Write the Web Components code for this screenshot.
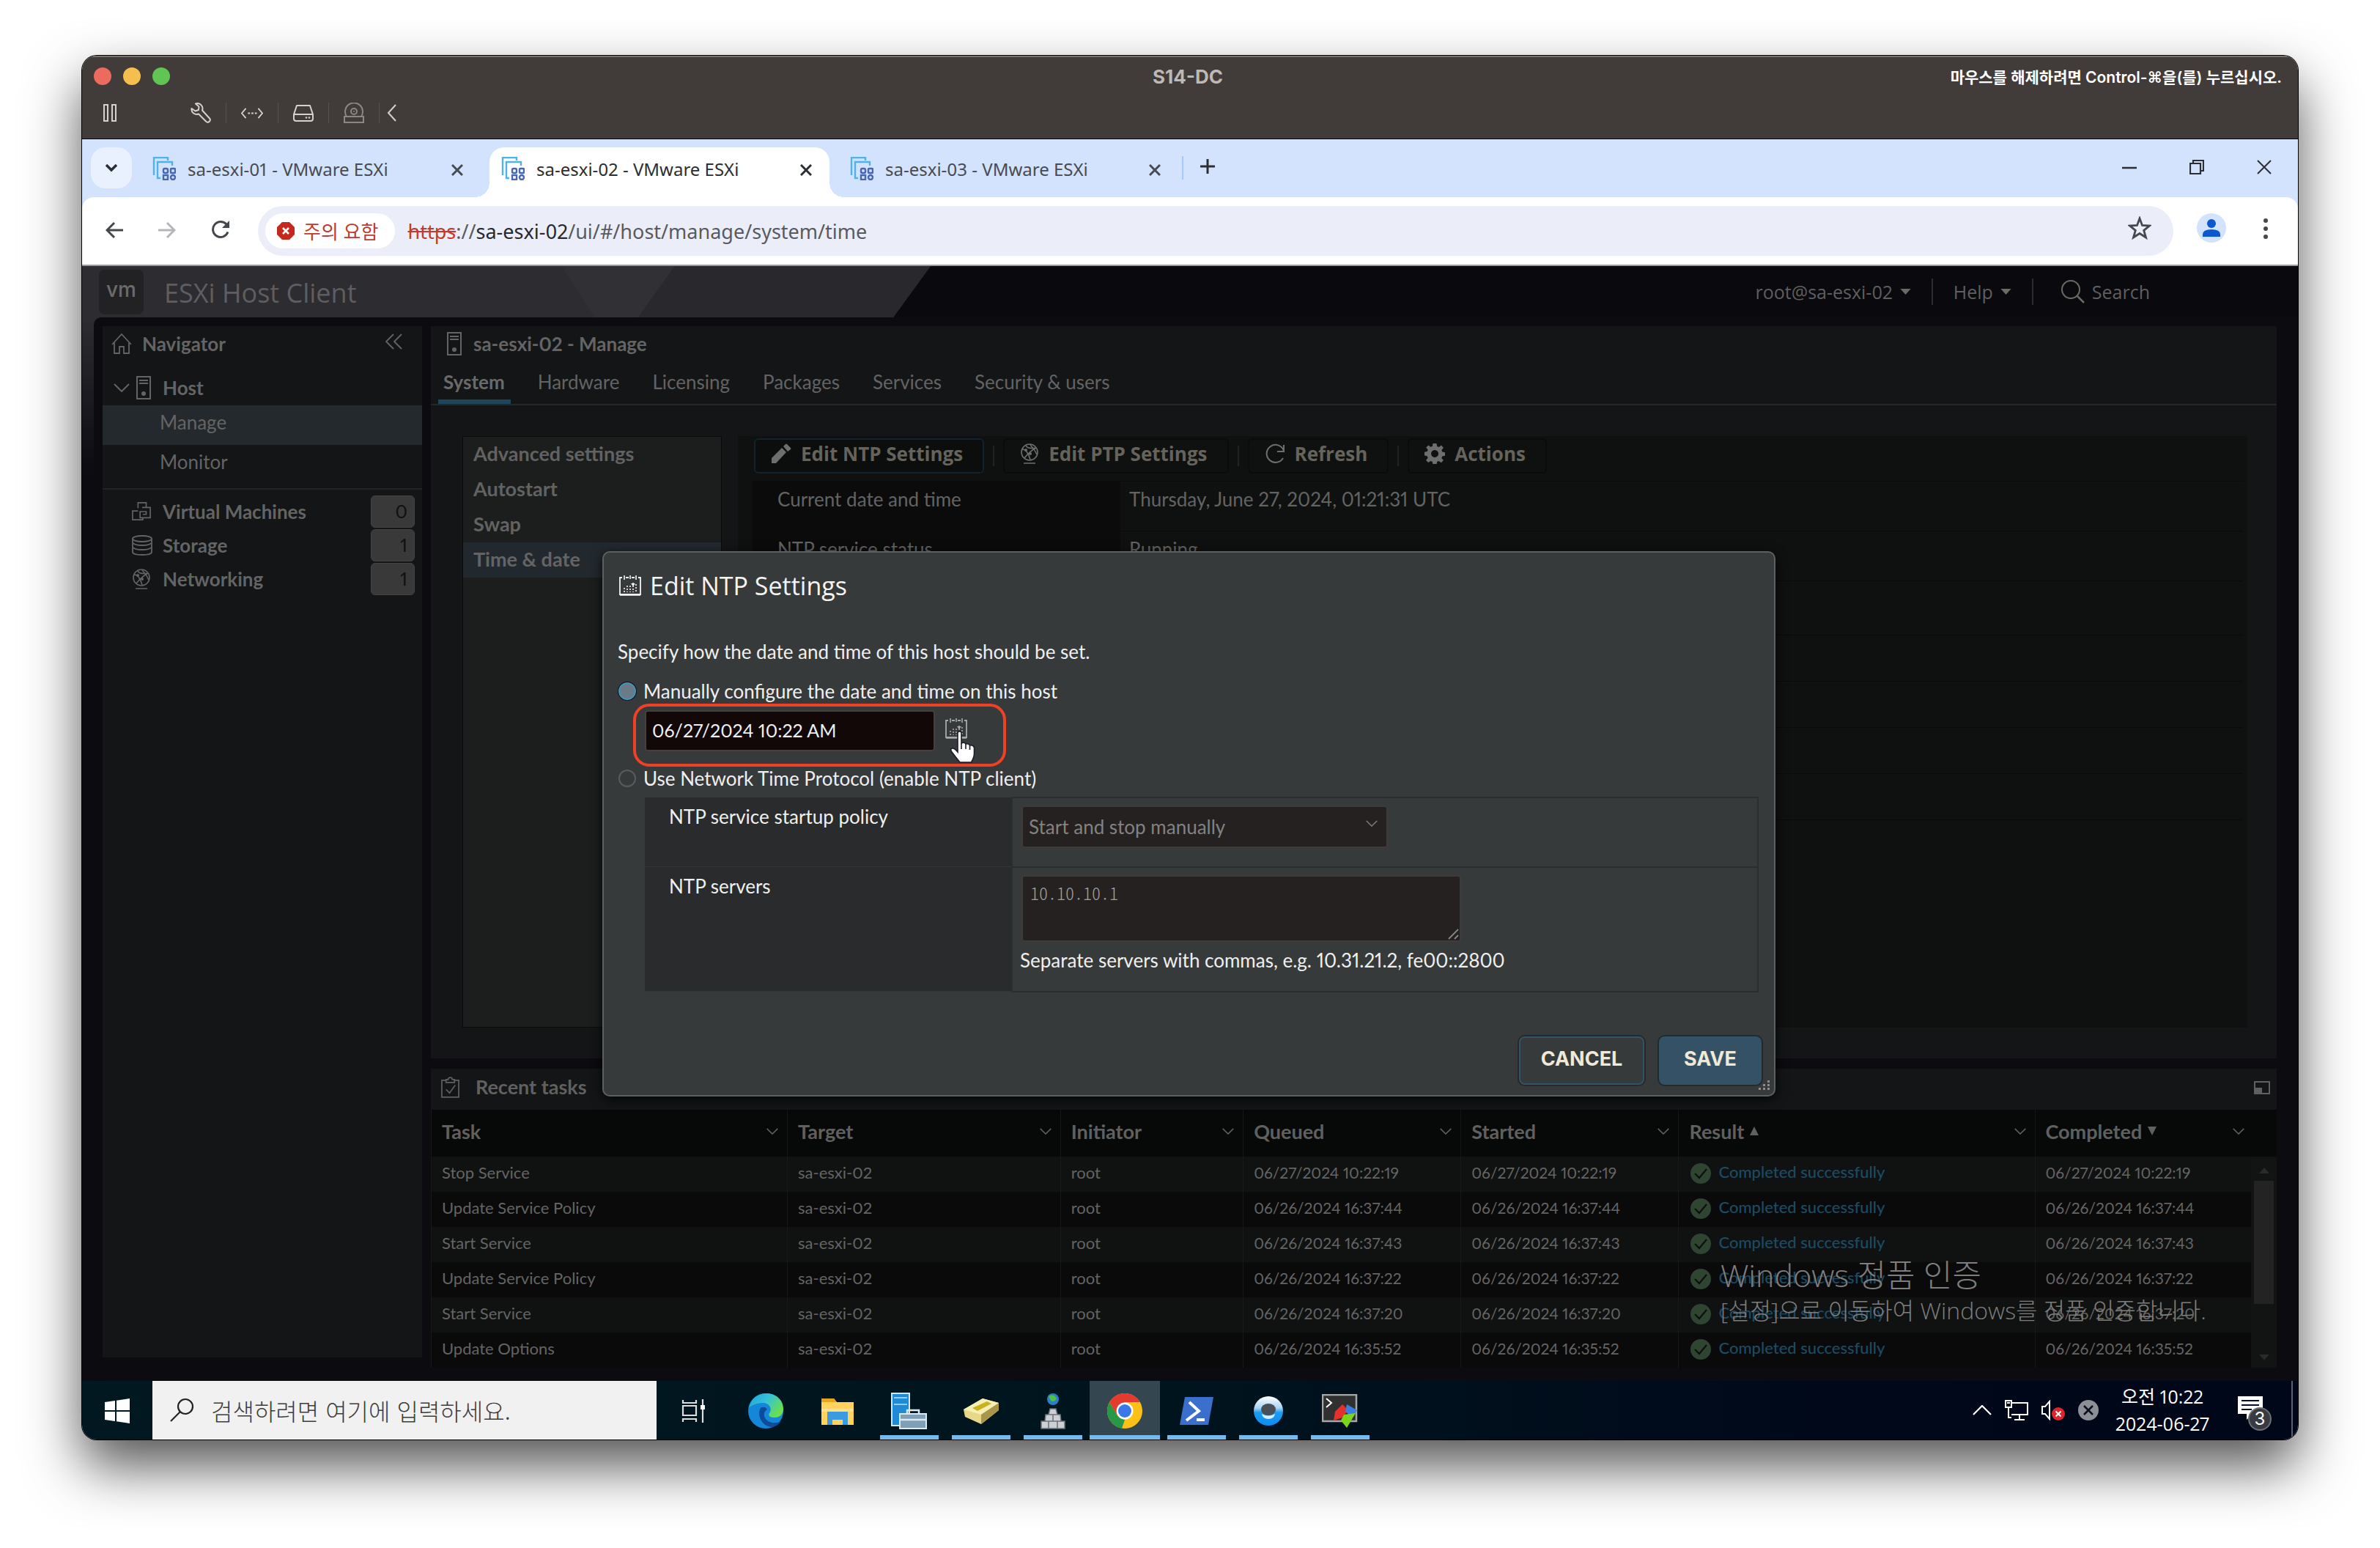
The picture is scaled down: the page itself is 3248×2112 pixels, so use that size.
<!DOCTYPE html>
<html lang="ko">
<head>
<meta charset="utf-8">
<title>S14-DC</title>
<style>
  body{margin:0;background:#fff;font-family:Lato,"Noto Sans CJK KR",sans-serif;font-variant-numeric:proportional-nums}
</style>
</head>
<body>
<vm-window></vm-window>
<script>
const ICONS = {
  pause:['0 0 20 24','<path d="M2 1h5v22H2zM13 1h5v22h-5z" fill="none" stroke="currentColor" stroke-width="2"/>'],
  wrench:['0 0 28 28','<path d="M7 1.500a7 7 0 0 1 9 9L26 21.500a3.200 3.200 0 0 1-4.500 4.500L11 15.500A7 7 0 0 1 1.500 8l5 3.500L11 10l.5-4.500z" fill="none" stroke="currentColor" stroke-width="2" stroke-linejoin="round"/>'],
  net:['0 0 32 16','<path d="M7 1 1 8l6 7M25 1l6 7-6 7" fill="none" stroke="currentColor" stroke-width="2"/><path d="M10 7h3v2h-3zM15 7h3v2h-3zM20 7h3v2h-3z" fill="currentColor"/>'],
  drive:['0 0 28 24','<path d="M5 2h18l4 12v6q0 3-3 3H4q-3 0-3-3v-6zM1 14h26" fill="none" stroke="currentColor" stroke-width="2" stroke-linejoin="round"/><circle cx="18" cy="18.500" r="1.300" fill="currentColor"/><circle cx="22" cy="18.500" r="1.300" fill="currentColor"/>'],
  disc:['0 0 28 28','<path d="M1 19h26v8H1zM4 19a12 12 0 1 1 20 0" fill="none" stroke="currentColor" stroke-width="2"/><circle cx="14" cy="12" r="4" fill="none" stroke="currentColor" stroke-width="2"/><circle cx="14" cy="12" r="1" fill="currentColor"/>'],
  chevleft:['0 0 14 24','<path d="M12 1 2 12l10 11" fill="none" stroke="currentColor" stroke-width="2"/>'],
  down:['0 0 20 12','<path d="m3 2 7 7 7-7" fill="none" stroke="currentColor" stroke-width="3.500"/>'],
  thin:['0 0 22 12','<path d="m1 1 10 10L21 1" fill="none" stroke="currentColor" stroke-width="2"/>'],
  esx:['0 0 32 32','<path d="M2 25V1h19v4" fill="none" stroke="#4fb3e8" stroke-width="2.400"/><path d="M11 29H7V7h20v5" fill="none" stroke="#4fb3e8" stroke-width="2.400"/><g fill="none" stroke="#4767b0" stroke-width="2.400"><rect x="15" y="16" width="6" height="6" rx="2"/><rect x="25" y="16" width="6" height="6" rx="1"/><rect x="15" y="25" width="6" height="6" rx="0"/><rect x="25" y="25" width="6" height="6" rx="3"/></g>'],
  x:['0 0 16 16','<path d="m1 1 14 14M15 1 1 15" stroke="currentColor" stroke-width="3"/>'],
  xthin:['0 0 20 20','<path d="m1 1 18 18M19 1 1 19" stroke="currentColor" stroke-width="2"/>'],
  plus:['0 0 20 20','<path d="M10 0v20M0 10h20" stroke="currentColor" stroke-width="3"/>'],
  minus:['0 0 20 20','<path d="M0 11h20" stroke="currentColor" stroke-width="2.500"/>'],
  restore:['0 0 20 20','<path d="M1 5h14v14H1zM5 5V1h14v14h-4" fill="none" stroke="currentColor" stroke-width="2.200"/>'],
  back:['0 0 24 24','<path d="M24 12H2M12 2 2 12l10 10" fill="none" stroke="currentColor" stroke-width="3"/>'],
  fwd:['0 0 24 24','<path d="M0 12h22M12 2l10 10-10 10" fill="none" stroke="currentColor" stroke-width="3"/>'],
  reload:['0 0 26 26','<path d="M23 16.500A10.500 10.500 0 1 1 21 6l3 3" fill="none" stroke="currentColor" stroke-width="3"/><path d="M25 1v10H15z" fill="currentColor"/>'],
  warn:['0 0 24 24','<path d="M7 0h10l7 7v10l-7 7H7l-7-7V7z" fill="#c5281c"/><path d="m8 8 8 8M16 8l-8 8" stroke="#fff" stroke-width="2.600"/>'],
  star:['0 0 32 32','<path d="m16 3 3.500 9.500 10 .5-7.800 6.300L24.500 29 16 23.500 7.500 29l2.800-9.700L2.500 13l10-.5z" fill="none" stroke="currentColor" stroke-width="2.800"/>'],
  person:['0 0 40 40','<circle cx="20" cy="20" r="20" fill="#d3e3fd"/><circle cx="20" cy="14" r="6" fill="#0b57d0"/><path d="M8 32v-3q0-7 12-7t12 7v3z" fill="#0b57d0"/>'],
  dots:['0 0 8 28','<g fill="currentColor"><circle cx="4" cy="3" r="3"/><circle cx="4" cy="14" r="3"/><circle cx="4" cy="25" r="3"/></g>'],
  caret:['0 0 16 9','<path d="M0 0h16l-8 9z" fill="currentColor"/>'],
  up:['0 0 16 9','<path d="M0 9h16L8 0z" fill="currentColor"/>'],
  triup:['0 0 12 12','<path d="M0 12h12L6 0z" fill="currentColor"/>'],
  tridown:['0 0 12 12','<path d="M0 0h12L6 12z" fill="currentColor"/>'],
  search:['0 0 32 32','<circle cx="13" cy="13" r="12" fill="none" stroke="currentColor" stroke-width="2"/><path d="m22 22 9 9" stroke="currentColor" stroke-width="2.500"/>'],
  home:['0 0 28 28','<path d="M1 15 14 1l13 14M4 12v15h7v-9h6v9h7V12" fill="none" stroke="currentColor" stroke-width="1.800"/>'],
  collapse:['0 0 24 22','<path d="M11 1 1 11l10 10M22 1 12 11l10 10" fill="none" stroke="currentColor" stroke-width="1.800"/>'],
  server:['0 0 20 32','<path d="M1 1h18v30H1zM4 6h12M4 10h12" fill="none" stroke="currentColor" stroke-width="2"/><circle cx="10" cy="24" r="3" fill="currentColor"/>'],
  vms:['0 0 28 28','<path d="M9 9V1h12v7M9 13h-8v13h15v-4M15 8h12v15H12v-9h9v4h-5" fill="none" stroke="currentColor" stroke-width="1.800"/>'],
  store:['0 0 28 28','<path d="M1 5v18q0 4 13 4t13-4V5" fill="none" stroke="currentColor" stroke-width="1.800"/><ellipse cx="14" cy="5" rx="13" ry="4" fill="none" stroke="currentColor" stroke-width="1.800"/><path d="M2 11q2 3 12 3t12-3M2 17q2 3 12 3t12-3" fill="none" stroke="currentColor" stroke-width="1.800"/>'],
  globe:['0 0 26 28','<g fill="none" stroke="currentColor" stroke-width="1.600"><circle cx="13" cy="12" r="11"/><path d="M3 8q7 0 11 14M8 3q3 5 14 3M22 6q-8 4-16 14M14 2q6 6 9 13M5 27h16"/></g><circle cx="8" cy="9" r="2" fill="currentColor"/><circle cx="14" cy="14" r="2" fill="currentColor"/>'],
  pencil:['0 0 28 28','<path d="M1 27v-7L15 6l6 6L7 27zM17 4l3-3q1-1 2 0l5 5q1 1 0 2l-4 3z" fill="currentColor"/>'],
  refresh:['0 0 28 28','<path d="M25 20a12 12 0 1 1 1-10M26 2v9h-9" fill="none" stroke="currentColor" stroke-width="2"/>'],
  gear:['0 0 28 28','<path fill-rule="evenodd" d="M11.500 0h5l.7 4 2.500 1L23 2.600 25.900 6l-2.600 3 1 2.500 3.700.8v4.400l-3.700.8-1 2.500 2.600 3-3.100 3.300-3.300-2.300-2.400 1-.6 4h-5l-.7-4-2.400-1L5.200 26 2 23l2.600-3.300-1-2.400L0 16.500v-4.700l3.700-.7 1-2.400L2.200 5.500 5.300 2.400l3.200 2.400 2.400-1zM14 9a5 5 0 1 0 .1 0z" fill="currentColor"/>'],
  cal:['0 0 30 28','<path d="M4 3H1v23h28V3h-3M9 3h4M17 3h4" fill="none" stroke="currentColor" stroke-width="1.800"/><path d="M1 26.500h28" stroke="currentColor" stroke-width="2.500"/><path d="M7 0v6M15 0v5M23 0v6" stroke="currentColor" stroke-width="1.600"/><path d="M7 17v6M11 14v9M15 14v9M19 10v13M23 12v11" stroke="currentColor" stroke-width="1.600" stroke-dasharray="2 2"/><path d="M16 11h6l-3 4z" fill="currentColor"/>'],
  clip:['0 0 26 30','<path d="M7 5H1v24h24V5h-6M7 8V4h3q0-3 3-3t3 3h3v4z" fill="none" stroke="currentColor" stroke-width="1.800"/><path d="m7 18 5 5 8-11" fill="none" stroke="currentColor" stroke-width="1.800"/>'],
  pop:['0 0 22 18','<path d="M1 1h20v16H1z" fill="none" stroke="currentColor" stroke-width="2"/><path d="M2 9h9v8H2z" fill="currentColor"/>'],
  ok:['0 0 28 28','<circle cx="14" cy="14" r="14" fill="#304432"/><path d="m6 14 6 6L22 8" fill="none" stroke="#0d0f0d" stroke-width="2.200"/>'],
  grip:['0 0 16 16','<path d="m2 15 13-13M10 15l5-5" stroke="currentColor" stroke-width="1.800"/>'],
  gripdots:['0 0 16 14','<g fill="currentColor"><path d="M13 0h3v3h-3zM13 5h3v3h-3zM13 10h3v3h-3zM7 5h3v3H7zM7 10h3v3H7zM1 10h3v3H1z"/></g>'],
  hand:['0 0 36 44','<path d="M11 3q0-2 2.500-2T16 3v14q4-2 6 1 4-1 5.500 2 5-1 6 3v8q0 5-4 12H14Q9 37 3 29q-3-5 1-5 3 0 7 5z" fill="#fff" stroke="#1b1d2c" stroke-width="1.600"/><path d="M16 17v8M22 18v7M27.500 20v6" stroke="#1b1d2c" stroke-width="1.600"/>'],
  win:['0 0 34 34','<path d="M0 5l14-2v13H0zM16 2.700 34 0v16H16zM0 18h14v13L0 29zM16 18h18v16l-18-2.700z" fill="#fff"/>'],
  find:['0 0 34 34','<circle cx="21" cy="12" r="10" fill="none" stroke="#222" stroke-width="2.200"/><path d="M14 19 1 32" stroke="#222" stroke-width="2.200"/>'],
  taskview:['0 0 34 34','<path d="M2 2v4h18V2M2 32v-4h18v4M2 10h18v13H2zM29 1v32" fill="none" stroke="#ddd" stroke-width="2.200"/><path d="M26 9h6v6h-6z" fill="#fff"/>'],
  edge:['0 0 48 48','<defs><linearGradient id="g" x1="0" y1="0" x2="1" y2=".6"><stop offset="0" stop-color="#1ba0dc"/><stop offset=".5" stop-color="#35c3d8"/><stop offset="1" stop-color="#6be04a"/></linearGradient></defs><circle cx="24" cy="24" r="24" fill="#1487d8"/><path d="M1 20C4 6 14 0 25 0c14 0 23 10 23 21 0 9-6 12-12 12-7 0-9-3-7-6 5-7-1-14-9-14C11 13 3 17 1 20z" fill="url(#g)"/><path d="M17 20c-5 8 0 25 16 26 5-1 9-4 12-8-10 5-21 1-23-7-1-5 2-8 4-9-2-4-6-4-9-2z" fill="#0d4c9c"/>'],
  folder:['0 0 44 38','<path d="M0 2h17l4 5h23v31H0z" fill="#ffd35c"/><path d="M0 2h17l4 5H0z" fill="#e8a41c"/><path d="M8 38V20h28v18h-7v-7H15v7z" fill="#3a9be0"/><path d="M0 16h44v4H0z" fill="#ffdf84"/>'],
  srvmgr:['0 0 50 50','<path d="M1 1h24v44H1z" fill="#1f8ad6" stroke="#cfe8f8" stroke-width="2"/><path d="M4 7h18M4 16h18" stroke="#8fd0fa" stroke-width="2"/><path d="M12 29h36v20H12z" fill="#7f9fb5" stroke="#dbe9f2" stroke-width="2"/><path d="M22 29v-5h16v5M12 37h36" fill="none" stroke="#dbe9f2" stroke-width="2.500"/>'],
  box:['0 0 48 40','<path d="M0 18 26 3l22 6v10L24 38 2 28z" fill="#e6d888"/><path d="M0 18 26 3l22 6-24 16z" fill="#f5efb4"/><path d="M24 25 48 9v10L24 38z" fill="#a8974a"/><path d="m12 16 20-9 6 3-19 10z" fill="#c7b31c"/>'],
  lab:['0 0 40 50','<circle cx="20" cy="9" r="8" fill="#2b7fc4"/><path d="M14 5q7-4 11 3-3 6-8 3z" fill="#4fc04f"/><path d="M16 22h8l2 8h4l1 9h5v10H4V39h5l1-9h4z" fill="#ccd0d4" stroke="#6b7075" stroke-width="1.500"/><path d="M9 39h22M15 30h10M20 30v9M14 39v10M26 39v10" stroke="#6b7075" stroke-width="1.500"/>'],
  chrome:['0 0 48 48','<circle cx="24" cy="24" r="24" fill="#fbc116"/><path d="M3.200 12 13.600 30 24 36 20 47.700A24 24 0 0 1 3.200 12z" fill="#279847"/><path d="M3.200 12A24 24 0 0 1 44.800 12H24L13.600 30z" fill="#e33b2e"/><circle cx="24" cy="24" r="11.500" fill="#fff"/><circle cx="24" cy="24" r="9" fill="#3b78e7"/>'],
  ps:['0 0 46 38','<path d="M7 0h39l-7 38H0z" fill="#3b6fce"/><path d="m13 7 13 12L9 32" fill="none" stroke="#fff" stroke-width="4"/><path d="M23 31h11" stroke="#fff" stroke-width="4"/>'],
  orb:['0 0 40 40','<defs><linearGradient id="o" x1="0" y1="0" x2="0" y2="1"><stop offset="0" stop-color="#fff"/><stop offset=".4" stop-color="#a9d4f2"/><stop offset=".55" stop-color="#1c9cf0"/><stop offset="1" stop-color="#0c8cf0"/></linearGradient></defs><circle cx="20" cy="20" r="20" fill="url(#o)"/><ellipse cx="20" cy="18" rx="10" ry="8" fill="#4a4f57"/><path d="M11 24q9 5 18 0-1 7-9 7t-9-7z" fill="#d5effd"/>'],
  term:['0 0 50 46','<path d="M1 1h46v36H1z" fill="#303030" stroke="#a7a7a7" stroke-width="2.500"/><path d="m6 6 7 6-7 6" fill="none" stroke="#fff" stroke-width="2"/><path d="m28 14 8 8-8 10-12 4 2-12z" fill="#e5302c"/><path d="m34 14 14 8-6 10-10-8z" fill="#3c7fe0"/><path d="m30 28 16-2-12 20-8-10z" fill="#7ad618"/>'],
  tup:['0 0 26 14','<path d="m1 13 12-12 12 12" fill="none" stroke="#fff" stroke-width="2.200"/>'],
  monitor:['0 0 32 28','<path d="M9 4h22v16H9M20 20v6M13 27h14M1 1h8v9H1zM5 10v14h4" fill="none" stroke="#fff" stroke-width="2"/><path d="M3 4h4" stroke="#fff" stroke-width="2"/>'],
  mute:['0 0 32 28','<path d="M1 9h4l6-7v24l-6-7H1z" fill="none" stroke="#fff" stroke-width="2"/><circle cx="23" cy="19" r="9" fill="#e0242c"/><path d="m19.500 15.500 7 7M26.500 15.500l-7 7" stroke="#fff" stroke-width="2"/>'],
  xc:['0 0 28 28','<circle cx="14" cy="14" r="14" fill="#8d8f96"/><path d="m8 8 12 12M20 8 8 20" stroke="#0a1020" stroke-width="2.600"/>'],
  note:['0 0 34 32','<path d="M0 0h34v24H20l-8 8v-8H0z" fill="#fff"/><path d="M5 6h24M5 12h24M5 18h14" stroke="#06101c" stroke-width="2"/>']
};
const define = (name, css, html) => customElements.define(name, class extends HTMLElement {
  connectedCallback(){
    if (this.shadowRoot) return;
    const root = this.attachShadow({mode:'open'});
    const t = document.createElement('template');
    t.innerHTML = `<style>*{box-sizing:border-box}:host{display:block;box-sizing:border-box}button{font:inherit;color:inherit;background:none;border:0;padding:0;margin:0}a{color:inherit;text-decoration:none}${css}</style>` + (typeof html === 'function' ? html(this) : html);
    root.append(t.content.cloneNode(true));
  }
});

define('ui-icon', ':host{display:inline-block;flex:none;line-height:0}svg{display:block}', el => {
  const [vb, body] = ICONS[el.getAttribute('name')];
  const [, , w, h] = vb.split(' ').map(Number);
  const width = Number(el.getAttribute('w')) || w;
  return `<svg viewBox="${vb}" width="${width}" height="${Math.round(width * h / w)}" aria-hidden="true">${body}</svg>`;
});

define('mac-titlebar', `
  :host{background:#413c39;border-top:2px solid #76726e;border-bottom:1px solid #000;color:#d4d0cd;padding-bottom:11px;font-family:Inter,"Noto Sans CJK KR",sans-serif}
  .top{display:grid;grid-template-columns:1fr auto 1fr;align-items:center;height:52px;padding:0 22px 0 16px}
  .lights{display:flex;gap:16px}
  .lights i{width:24px;height:24px;border-radius:50%}
  b{font-size:26px;font-weight:700;color:#bdb9b6}
  .hint{justify-self:end;color:#fff;font-size:21px;font-weight:600}
  .tools{display:flex;align-items:center;height:48px;padding-left:28px}
  .tools ui-icon:first-child{margin-right:100px}
  .tools s{width:1px;height:28px;background:#57524f;margin:0 20px}
  .tools s:last-of-type{margin-right:10px}
  .dim{color:#8b8784}`,
  `<div class="top"><div class="lights"><i style="background:#ed6a5e"></i><i style="background:#f5bf4f"></i><i style="background:#61c554"></i></div><b>S14-DC</b><span class="hint">마우스를 해제하려면 Control-⌘을(를) 누르십시오.</span></div>
  <div class="tools"><ui-icon name="pause"></ui-icon><ui-icon name="wrench"></ui-icon><s></s><ui-icon name="net" w="30"></ui-icon><s></s><ui-icon name="drive"></ui-icon><s></s><ui-icon name="disc" class="dim"></ui-icon><s></s><ui-icon name="chevleft"></ui-icon></div>`);

define('browser-tab', `
  :host{width:464px;height:68px;display:flex;align-items:center;padding:0 24px 10px 16px;gap:16px;position:relative;border-radius:20px 20px 0 0;color:#474b52}
  :host([active]){background:#fff;color:#2b2e33}
  :host([active])::before,:host([active])::after{content:"";position:absolute;bottom:0;width:20px;height:20px}
  :host([active])::before{left:-20px;background:radial-gradient(circle at 0 0,transparent 20px,#fff 20px)}
  :host([active])::after{right:-20px;background:radial-gradient(circle at 100% 0,transparent 20px,#fff 20px)}
  span{flex:1;white-space:nowrap}`,
  `<ui-icon name="esx"></ui-icon><span><slot></slot></span><button aria-label="Close tab"><ui-icon name="x"></ui-icon></button>`);

define('tab-strip', `
  :host{background:#d3e3fd;display:flex;align-items:flex-end;height:79px;padding-left:12px;font-family:"Noto Sans","Noto Sans CJK KR",sans-serif;font-size:24px;color:#2b2e33}
  .list{width:56px;height:56px;border-radius:20px;background:#eaf1fe;margin:0 12px 12px 0;display:grid;place-items:center}
  .tabs{display:flex;gap:12px}
  s{width:2px;height:32px;background:#a8c7fa;margin:0 23px 24px 5px}
  .add{margin-bottom:25px}
  .win{margin-left:auto;display:flex;gap:72px;padding:0 36px 24px 0}`,
  `<button class="list" aria-label="Search tabs"><ui-icon name="down" w="20"></ui-icon></button>
  <div class="tabs"><browser-tab>sa-esxi-01 - VMware ESXi</browser-tab><browser-tab active>sa-esxi-02 - VMware ESXi</browser-tab><browser-tab>sa-esxi-03 - VMware ESXi</browser-tab></div>
  <s></s><button class="add" aria-label="New tab"><ui-icon name="plus"></ui-icon></button>
  <div class="win"><button aria-label="Minimize"><ui-icon name="minus"></ui-icon></button><button aria-label="Restore"><ui-icon name="restore"></ui-icon></button><button aria-label="Close"><ui-icon name="xthin"></ui-icon></button></div>`);

define('browser-toolbar', `
  :host{background:#d3e3fd}
  .bar{background:#fff;border-radius:16px 16px 0 0;display:flex;align-items:center;height:94px;border-bottom:2px solid #9b9b9b;padding:0 40px 0 32px;color:#44474c;font-family:"Noto Sans","Noto Sans CJK KR",sans-serif;font-size:27px}
  .nav{display:flex;gap:48px;width:208px;align-items:center}
  .omni{flex:1;height:68px;border-radius:34px;background:#ebeef8;display:flex;align-items:center;padding:0 30px 0 10px}
  .chip{background:#fff;border-radius:24px;height:48px;display:flex;align-items:center;gap:12px;padding:0 23px 0 16px;color:#c03a2f;font-size:26px;margin-right:17px}
  .url{flex:1;color:#575b61}.url b{font-weight:400;color:#26292e}.url del{color:#c5392d}
  .me{margin:0 50px 0 32px}`,
  `<div class="bar"><div class="nav"><button aria-label="Back"><ui-icon name="back"></ui-icon></button><button aria-label="Forward" style="color:#b4b6b9"><ui-icon name="fwd"></ui-icon></button><button aria-label="Reload"><ui-icon name="reload"></ui-icon></button></div>
  <div class="omni"><button class="chip"><ui-icon name="warn"></ui-icon>주의 요함</button><span class="url"><del>https</del>://<b>sa-esxi-02</b>/ui/#/host/manage/system/time</span><button aria-label="Bookmark"><ui-icon name="star"></ui-icon></button></div>
  <button class="me" aria-label="Profile"><ui-icon name="person"></ui-icon></button><button aria-label="Menu"><ui-icon name="dots"></ui-icon></button></div>`);

define('esxi-header', `
  :host{height:70px;display:flex;align-items:center;background:#09090e;position:relative;color:#5f5f5f;padding:0 202px 0 23px;font-size:26px}
  .art{position:absolute;left:0;top:0}
  .vm{position:relative;width:61px;height:61px;border-radius:8px;background:#222225;display:grid;place-items:center;font:500 28px Inter,sans-serif;color:#6b6b6b;padding-bottom:6px;margin:0 28px 0 0}
  h1{position:relative;margin:2px auto 0 0;font:400 36px "Open Sans",sans-serif;color:#5e5e60}
  .m{display:flex;align-items:center;gap:10px;font-family:"Open Sans",sans-serif;font-size:25px}
  .m ui-icon{color:#6b6a64}
  s{width:2px;height:36px;background:#2c2c2e;margin:0 28px}
  s+.m+s{margin-right:38px}`,
  `<svg class="art" width="1160" height="70" aria-hidden="true"><path d="M0 0h1158l-51 70H0z" fill="#2d2c31"/><path d="M655 0h154l-50 70h-60z" fill="#313035"/><path d="M809 0h349l-51 70H759z" fill="#29282d"/></svg>
  <div class="vm">vm</div><h1>ESXi Host Client</h1>
  <button class="m">root@sa-esxi-02 <ui-icon name="caret" w="15"></ui-icon></button><s></s><button class="m">Help <ui-icon name="caret" w="15"></ui-icon></button><s></s><button class="m"><ui-icon name="search"></ui-icon>Search</button>`);

define('nav-count', `:host{width:60px;height:44px;border-radius:6px;background:#393939;color:#101010;border:1px solid #434343;text-align:right;padding-right:9px;line-height:40px;font-size:25px;font-weight:400;margin-left:auto}`, `<slot></slot>`);

define('host-navigator', `
  :host{background:#131517;color:#646464;font-size:26px;font-weight:700}
  header{height:50px;display:flex;align-items:center;padding:0 26px 2px 12px;gap:14px}
  header button{margin-left:auto;padding-bottom:4px}
  .host{height:58px;display:flex;align-items:center;padding:10px 0 0 15px}
  .host ui-icon+ui-icon{margin:0 16px 0 9px}
  .sub{display:block;padding-left:78px;font-weight:400;height:54px;line-height:46px;color:#646464}
  .on{background:#23292d}
  hr{border:0;border-top:2px solid #222426;margin:5px 0 7px}
  .row{display:flex;align-items:center;height:46px;padding:0 10px 0 40px;gap:14px}
  .row ui-icon{width:28px}`,
  `<header><ui-icon name="home"></ui-icon>Navigator<button aria-label="Collapse"><ui-icon name="collapse"></ui-icon></button></header>
  <div class="host"><ui-icon name="thin"></ui-icon><ui-icon name="server"></ui-icon>Host</div>
  <a class="sub on" href="#manage">Manage</a><a class="sub" href="#monitor">Monitor</a><hr>
  <a class="row" href="#vms"><ui-icon name="vms" w="26"></ui-icon>Virtual Machines<nav-count>0</nav-count></a>
  <a class="row" href="#storage"><ui-icon name="store"></ui-icon>Storage<nav-count>1</nav-count></a>
  <a class="row" href="#net"><ui-icon name="globe"></ui-icon>Networking<nav-count>1</nav-count></a>`);

define('tool-button', `
  :host{display:flex;align-items:center}
  button{height:48px;border:2px solid #0a0b0b;border-radius:6px;display:flex;align-items:center;gap:13px;padding:0 27px 6px 21px;font:700 26px "Open Sans",sans-serif;color:#65635b;background:#0e1110;white-space:nowrap}
  button ui-icon{color:#6e6e6e}
  :host([focused]) button{border-color:#10232e;background:#0b0e0d}
  :host(:not(:last-child))::after{content:"";width:2px;height:28px;background:#222;margin:0 12px}`,
  el => `<button><ui-icon name="${el.getAttribute('icon')}"></ui-icon><slot></slot></button>`);

define('manage-panel', `
  :host{background:#131517;color:#636363;font-size:26px;display:flex;flex-direction:column}
  header{height:54px;display:flex;align-items:center;gap:16px;padding:0 22px 6px;font-weight:700;color:#646464;font-size:26px}
  nav{display:flex;gap:30px;border-bottom:2px solid #25282a;padding-left:10px}
  nav a{height:52px;line-height:45px;padding:0 8px 0 7px;border-bottom:6px solid transparent}
  nav a.on{font-weight:700;color:#6a6a6a;border-color:#1c475b}
  .body{flex:1;display:grid;grid-template-columns:354px minmax(0,1fr);gap:22px;padding:42px 40px 42px 43px}
  .side{background:#1c1e1d;border:1px solid #0a0b0b;font-weight:700;font-size:27px;color:#626262}
  .side a{display:block;height:48px;line-height:46px;padding-left:14px}
  .side .on{background:#22292e;color:#646464}
  .detail{background:#0f1110;padding:3px 6px 0 20px}
  .tools{display:flex;height:58px;align-items:flex-start;padding-left:2px}
  table{width:100%;border-collapse:collapse;table-layout:fixed}
  th{width:502px;background:#0b0b0b;text-align:left;font-weight:400;padding:5px 0 0 34px}
  td{padding:5px 0 0 12px}
  th,td{vertical-align:top;line-height:38px;height:68px;border-top:1px solid #0a0b0b}
  td{border-bottom:1px solid #090a0a}
  tr.tall td,tr.tall th{height:74px}tr.low td,tr.low th{height:63px}`,
  `<header><ui-icon name="server"></ui-icon>sa-esxi-02 - Manage</header>
  <nav><a class="on" href="#s">System</a><a href="#h">Hardware</a><a href="#l">Licensing</a><a href="#p">Packages</a><a href="#v">Services</a><a href="#u">Security &amp; users</a></nav>
  <div class="body"><div class="side"><a href="#adv">Advanced settings</a><a href="#auto">Autostart</a><a href="#swap">Swap</a><a class="on" href="#time">Time &amp; date</a></div>
  <div class="detail"><div class="tools"><tool-button icon="pencil" focused>Edit NTP Settings</tool-button><tool-button icon="globe">Edit PTP Settings</tool-button><tool-button icon="refresh">Refresh</tool-button><tool-button icon="gear">Actions</tool-button></div>
  <table><tr><th>Current date and time</th><td>Thursday, June 27, 2024, 01:21:31 UTC</td></tr><tr><th>NTP service status</th><td>Running</td></tr><tr class="tall"><th></th><td></td></tr><tr class="low"><th></th><td></td></tr><tr class="low"><th></th><td></td></tr><tr class="low"><th></th><td></td></tr><tr class="low"><th></th><td></td></tr></table></div></div>`);

const TASKS = [['Stop Service','06/27/2024 10:22:19'],['Update Service Policy','06/26/2024 16:37:44'],['Start Service','06/26/2024 16:37:43'],['Update Service Policy','06/26/2024 16:37:22'],['Start Service','06/26/2024 16:37:20'],['Update Options','06/26/2024 16:35:52']];
define('recent-tasks', `
  :host{color:#646464;background:#131517}
  header{height:56px;display:flex;align-items:center;gap:22px;padding:0 9px 6px 14px;font-size:27px;line-height:30px;font-weight:700;color:#606060}
  header button{margin-left:auto}
  .wrap{position:relative}
  table{width:100%;border-collapse:collapse;table-layout:fixed}
  th{height:64px;background:#070909;text-align:left;font-size:27px;font-weight:700;color:#606060;padding:0 12px 6px 14px;border-left:1px solid #151717}
  th div{display:flex;align-items:center;gap:8px}
  th .c{margin-left:auto}
  th:last-child .c{margin-right:32px}
  td{height:48px;font-size:22px;padding:0 0 6px 14px;border-left:1px solid #171919;white-space:nowrap}
  .d{font-size:21px}
  tr:nth-child(odd) td{background:#101111}tr:nth-child(even) td{background:#0a0a0a}
  .r{display:flex;align-items:center;gap:10px;color:#1d4b61;font-size:22px;line-height:26px;font-weight:500}
  .r ui-icon{margin:4px 0 0 2px}
  .bar{position:absolute;right:0;top:65px;bottom:0;width:35px;background:#121313;display:flex;flex-direction:column;align-items:center;padding:14px 0 10px;color:#2a2a2a}
  .bar i{width:27px;height:168px;background:#232323;margin:10px 0 auto}`,
  () => `<header><ui-icon name="clip" w="25"></ui-icon>Recent tasks<button aria-label="Minimize"><ui-icon name="pop"></ui-icon></button></header>
  <div class="wrap"><table><colgroup><col style="width:19.300%"><col style="width:14.800%"><col style="width:9.900%"><col style="width:11.800%"><col style="width:11.800%"><col style="width:19.300%"><col></colgroup>
  <thead><tr>${['Task','Target','Initiator','Queued','Started','Result','Completed'].map(h => `<th><div>${h}${h==='Result'?'<ui-icon name="triup"></ui-icon>':h==='Completed'?'<ui-icon name="tridown"></ui-icon>':''}<ui-icon class="c" name="thin" w="16"></ui-icon></div></th>`).join('')}</tr></thead>
  <tbody>${TASKS.map(([t,d]) => `<tr><td>${t}</td><td>sa-esxi-02</td><td>root</td><td class="d">${d}</td><td class="d">${d}</td><td><div class="r"><ui-icon name="ok"></ui-icon>Completed successfully</div></td><td class="d">${d}</td></tr>`).join('')}</tbody></table>
  <div class="bar"><ui-icon name="up" w="14"></ui-icon><i></i><ui-icon name="caret" w="14"></ui-icon></div></div>`);

define('ntp-dialog', `
  :host{position:relative;width:1601px;background:#373a3b;border:2px solid #5d6062;border-radius:10px;box-shadow:0 4px 16px rgba(0,0,0,.8);color:#efefef;font-size:26px;padding:0 17px 14px 19px}
  h2{margin:0;height:92px;display:flex;align-items:center;gap:12px;padding-bottom:2px;font:400 34px "Open Sans",sans-serif;color:#f4f4f4}
  h2 ui-icon{margin-left:2px}
  p{margin:23px 0 17px;line-height:40px;height:40px}
  .opt{display:flex;align-items:center;gap:10px;height:34px;padding-left:2px}
  input[type=radio]{appearance:none;width:24px;height:24px;margin:0 0 0 -1px;border-radius:50%;border:2px solid #595c5e}
  input[type=radio]:checked{background:#697b86;border-color:#4394b8;box-shadow:0 0 0 1px #111}
  .date{position:relative;display:flex;width:max-content;gap:14px;margin:9px 0 20px 37px;height:56px}
  .date input{width:396px;border:2px solid #453f3e;border-radius:4px;background:#120808;color:#efefef;font:inherit;font-size:25px;font-variant-numeric:inherit;padding:0 8px 2px}
  .date button{height:26px;margin-top:11px;color:#a8aaaa}
  .mark{position:absolute;left:-16px;right:-53px;top:-9px;bottom:-21px;border:4px solid #ee4125;border-radius:22px}
  .cur{position:absolute;left:416px;top:28px}
  table{width:100%;border-collapse:collapse;table-layout:fixed;margin:8px 0 60px}
  .tw{padding:0 4px 0 37px}
  th{width:501px;background:#2a2b2c;text-align:left;font-weight:400;vertical-align:top;padding:6px 0 0 33px;line-height:40px;border-bottom:1px solid #333638}
  td{vertical-align:top;padding:10px 12px 0;border:2px solid #2b2e2f}
  tr{height:95px}tr+tr{height:170px}
  .sel{position:relative;width:500px;height:58px}
  select{appearance:none;width:100%;height:58px;border:2px solid #3f3b3a;border-radius:4px;background:#242120;color:#828282;font:inherit;padding:0 8px;opacity:1}
  .sel ui-icon{position:absolute;right:14px;top:20px;color:#777}
  .ta{position:relative;width:600px;height:91px}
  textarea{display:block;width:100%;height:91px;resize:none;border:2px solid #3f3b3a;border-radius:4px;background:#242120;color:#9f9f9f;font:300 24px/28px "Noto Sans CJK KR",monospace;font-feature-settings:"hwid";padding:8px 10px}
  .ta ui-icon{position:absolute;right:3px;bottom:3px;color:#888}
  .hint{line-height:40px;margin:5px 0 0 -2px}
  footer{display:flex;justify-content:flex-end;gap:20px}
  footer button{height:66px;min-width:171px;border:2px solid #2f5367;border-radius:8px;box-shadow:0 0 0 2px #26292b;padding:0 0 4px;font:700 27px Inter,sans-serif;color:#eee9d9}
  footer .save{background:#345165;min-width:140px}
  .gd{position:absolute;right:6px;bottom:6px;color:#8b8d8e}`,
  `<h2><ui-icon name="cal"></ui-icon>Edit NTP Settings</h2>
  <p>Specify how the date and time of this host should be set.</p>
  <div class="opt"><input type="radio" name="m" id="m1" checked><label for="m1">Manually configure the date and time on this host</label></div>
  <div class="date"><input type="text" aria-label="Date and time" value="06/27/2024 10:22 AM"><button aria-label="Pick date"><ui-icon name="cal"></ui-icon></button><div class="mark"></div><ui-icon class="cur" name="hand"></ui-icon></div>
  <div class="opt"><input type="radio" name="m" id="m2"><label for="m2">Use Network Time Protocol (enable NTP client)</label></div>
  <div class="tw"><table><tr><th><label for="pol">NTP service startup policy</label></th><td><div class="sel"><select id="pol" disabled><option>Start and stop manually</option></select><ui-icon name="thin" w="16"></ui-icon></div></td></tr>
  <tr><th><label for="srv">NTP servers</label></th><td><div class="ta"><textarea id="srv" disabled>10.10.10.1</textarea><ui-icon name="grip"></ui-icon></div><div class="hint">Separate servers with commas, e.g. 10.31.21.2, fe00::2800</div></td></tr></table></div>
  <footer><button>CANCEL</button><button class="save">SAVE</button></footer><ui-icon class="gd" name="gripdots"></ui-icon>`);

define('activation-mark', `
  :host{position:absolute;right:118px;bottom:74px;width:670px;color:#7e7e7e;font-family:"Open Sans","Noto Sans CJK KR",sans-serif;font-weight:300;white-space:nowrap}
  div{font-size:43px;line-height:52px}p{margin:0;font-size:32px;line-height:44px}`,
  `<div>Windows 정품 인증</div><p>[설정]으로 이동하여 Windows를 정품 인증합니다.</p>`);

define('esxi-client', `
  :host{position:relative;display:flex;flex-direction:column;background:linear-gradient(#2d2c31 70px,#0b0b11 280px)}
  .page{flex:1;display:grid;grid-template-columns:436px minmax(0,1fr);gap:12px;background:#0b0b10;margin-left:16px;padding:12px 29px 18px 12px;border-top-left-radius:10px}
  host-navigator{margin-bottom:14px}
  main{display:flex;flex-direction:column;gap:14px}
  manage-panel{flex:1}
  .veil{position:absolute;inset:0;display:grid;place-items:center;padding-right:3px}`,
  `<esxi-header></esxi-header><div class="page"><host-navigator></host-navigator><main><manage-panel></manage-panel><recent-tasks></recent-tasks></main></div>
  <div class="veil"><ntp-dialog role="dialog" aria-label="Edit NTP Settings"></ntp-dialog></div><activation-mark></activation-mark>`);

define('task-app', `
  :host{width:80px;height:80px;margin-right:18px;border-bottom:6px solid transparent}
  button{width:80px;height:74px;display:grid;place-items:center;padding-top:8px}
  :host([open]){border-color:#76b9ed}
  :host([active]){width:96px;background:#34464f;margin:0 10px 0 -8px}
  :host([active]) button{width:96px}`,
  el => `<button aria-label="${el.getAttribute('label')}"><ui-icon name="${el.getAttribute('icon')}"></ui-icon></button>`);

define('win-taskbar', `
  :host{display:flex;height:80px;background:linear-gradient(90deg,#011820,#00141e 50%,#00081a 80%,#000718);color:#fff;font-family:"Open Sans","Noto Sans CJK KR",sans-serif}
  .start{width:96px;padding:1px 0 0;display:grid;place-items:center}
  .search{width:688px;background:#f1f1f1;display:flex;align-items:center;gap:22px;padding-left:24px}
  .search input{border:0;background:none;font:300 32px "Noto Sans CJK KR",sans-serif;width:560px;padding:0;outline:0}
  .search input::placeholder{color:#3d3d3d;opacity:1}
  .apps{display:flex;margin-left:11px}
  .tray{margin-left:auto;display:flex;align-items:center;gap:18px}
  .clock{width:132px;text-align:center;font-size:25px;line-height:37px;margin-left:3px;white-space:nowrap}
  .note{position:relative;margin:0 21px 0 19px;padding-bottom:2px}
  .note b{position:absolute;left:14px;top:15px;width:32px;height:32px;border-radius:50%;background:#383b42;border:2px solid #6c6f75;font:24px/28px Inter,sans-serif;text-align:center}
  .edge{width:9px;align-self:stretch;border-left:2px solid #5a6270}`,
  `<button class="start" aria-label="Start"><ui-icon name="win"></ui-icon></button>
  <label class="search"><ui-icon name="find"></ui-icon><input type="text" aria-label="Search" placeholder="검색하려면 여기에 입력하세요."></label>
  <div class="apps"><task-app icon="taskview" label="Task view"></task-app><task-app icon="edge" label="Edge"></task-app><task-app icon="folder" label="Explorer"></task-app><task-app open icon="srvmgr" label="Server Manager"></task-app><task-app open icon="box" label="Tools"></task-app><task-app open icon="lab" label="Network"></task-app><task-app open active icon="chrome" label="Chrome"></task-app><task-app open icon="ps" label="PowerShell"></task-app><task-app open icon="orb" label="Viewer"></task-app><task-app open icon="term" label="Terminal"></task-app></div>
  <div class="tray"><ui-icon name="tup"></ui-icon><ui-icon name="monitor"></ui-icon><ui-icon name="mute"></ui-icon><ui-icon name="xc"></ui-icon><div class="clock"><div>오전 10:22</div><div>2024-06-27</div></div><div class="note"><ui-icon name="note"></ui-icon><b>3</b></div><span class="edge"></span></div>`);

define('vm-window', `
  :host{min-height:100vh;padding:76px 112px 148px;display:flex}
  .win{flex:1;min-width:0;display:flex;flex-direction:column;border-radius:20px;overflow:hidden}
  .shade{flex:1;min-width:0;display:flex;border-radius:20px;box-shadow:0 0 0 1px #000,0 36px 76px rgba(0,0,0,.68)}
  esxi-client{flex:1}`,
  `<div class="shade"><div class="win"><mac-titlebar></mac-titlebar><tab-strip></tab-strip><browser-toolbar></browser-toolbar><esxi-client></esxi-client><win-taskbar></win-taskbar></div></div>`);
</script>
</body>
</html>
